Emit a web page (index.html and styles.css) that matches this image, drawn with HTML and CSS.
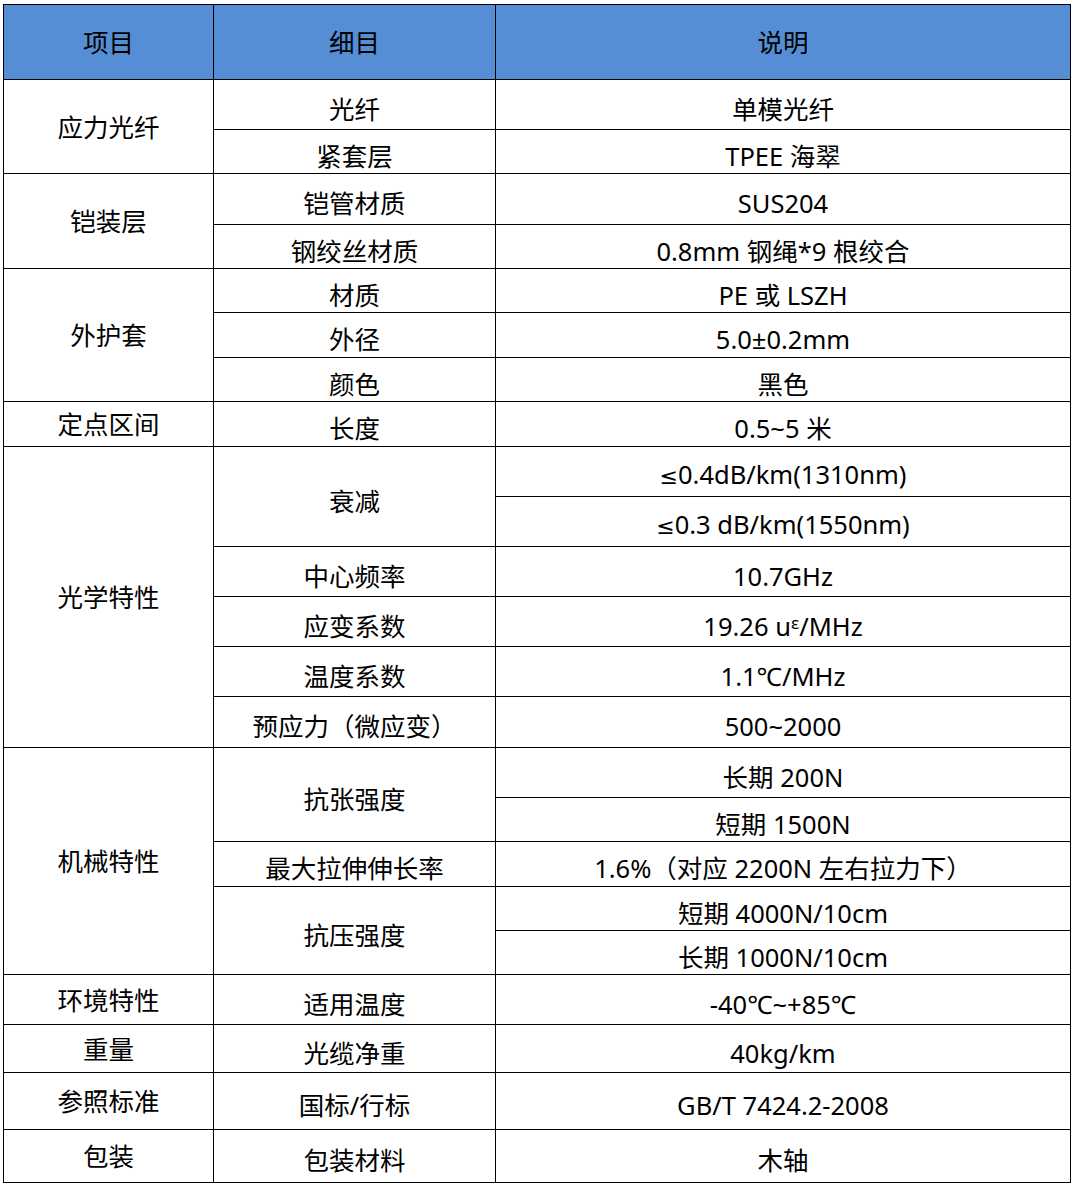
FILE: index.html
```html
<!DOCTYPE html>
<html lang="zh-CN">
<head>
<meta charset="utf-8">
<title>光缆参数</title>
<link rel="stylesheet" href="styles.css">
</head>
<body>
<table class="spec">
  <colgroup><col class="col1"><col class="col2"><col class="col3"></colgroup>
  <thead>
    <tr class="h75"><th>项目</th><th>细目</th><th>说明</th></tr>
  </thead>
  <tbody>
    <tr class="h50"><td class="c1" rowspan="2">应力光纤</td><td class="c2">光纤</td><td class="c3">单模光纤</td></tr>
    <tr class="h44"><td class="c2">紧套层</td><td class="c3">TPEE 海翠</td></tr>
    <tr class="h51"><td class="c1" rowspan="2">铠装层</td><td class="c2">铠管材质</td><td class="c3">SUS204</td></tr>
    <tr class="h44"><td class="c2">钢绞丝材质</td><td class="c3">0.8mm 钢绳*9 根绞合</td></tr>
    <tr class="h44"><td class="c1" rowspan="3">外护套</td><td class="c2">材质</td><td class="c3">PE 或 LSZH</td></tr>
    <tr class="h45"><td class="c2">外径</td><td class="c3">5.0±0.2mm</td></tr>
    <tr class="h44"><td class="c2">颜色</td><td class="c3">黑色</td></tr>
    <tr class="h45"><td class="c1">定点区间</td><td class="c2">长度</td><td class="c3">0.5~5 米</td></tr>
    <tr class="h50"><td class="c1" rowspan="6">光学特性</td><td class="c2" rowspan="2">衰减</td><td class="c3"><span class="le">≤</span>0.4dB/km(1310nm)</td></tr>
    <tr class="h50"><td class="c3"><span class="le">≤</span>0.3 dB/km(1550nm)</td></tr>
    <tr class="h50"><td class="c2">中心频率</td><td class="c3">10.7GHz</td></tr>
    <tr class="h50"><td class="c2">应变系数</td><td class="c3">19.26 u<span class="eps">ɛ</span>/MHz</td></tr>
    <tr class="h50"><td class="c2">温度系数</td><td class="c3">1.1℃/MHz</td></tr>
    <tr class="h51"><td class="c2">预应力（微应变）</td><td class="c3">500~2000</td></tr>
    <tr class="h50"><td class="c1" rowspan="5">机械特性</td><td class="c2" rowspan="2">抗张强度</td><td class="c3">长期 200N</td></tr>
    <tr class="h44"><td class="c3">短期 1500N</td></tr>
    <tr class="h45"><td class="c2">最大拉伸伸长率</td><td class="c3">1.6%（对应 2200N 左右拉力下）</td></tr>
    <tr class="h44"><td class="c2" rowspan="2">抗压强度</td><td class="c3">短期 4000N/10cm</td></tr>
    <tr class="h44"><td class="c3">长期 1000N/10cm</td></tr>
    <tr class="h50"><td class="c1">环境特性</td><td class="c2">适用温度</td><td class="c3">-40℃~+85℃</td></tr>
    <tr class="h48"><td class="c1">重量</td><td class="c2">光缆净重</td><td class="c3">40kg/km</td></tr>
    <tr class="h57"><td class="c1">参照标准</td><td class="c2">国标/行标</td><td class="c3">GB/T 7424.2-2008</td></tr>
    <tr class="h53"><td class="c1">包装</td><td class="c2">包装材料</td><td class="c3">木轴</td></tr>
  </tbody>
</table>
</body>
</html>
```

FILE: styles.css
```css
html, body {
  background: #ffffff;
}
body {
  margin: 4px 0 0 3px;
  font-family: "Noto Sans", "Noto Sans CJK SC", sans-serif;
  font-size: 25.5px;
  color: #000000;
}
.spec {
  border-collapse: collapse;
  table-layout: fixed;
  width: 1067px;
}
.col1 { width: 210px; }
.col2 { width: 282px; }
.col3 { width: 575px; }
.spec th,
.spec td {
  border: 1px solid #000000;
  text-align: center;
  vertical-align: middle;
  line-height: 30px;
  padding: 0;
  white-space: nowrap;
}
.spec th {
  background: #558ed5;
  font-weight: normal;
}
.spec td.c2,
.spec td.c3 {
  padding-top: 8px;
}
.le {
  font-family: "DejaVu Sans", sans-serif;
  font-size: 22px;
}
.eps {
  font-size: 17px;
  vertical-align: 7px;
  line-height: 1;
}
.h44 { height: 44px; }
.h45 { height: 45px; }
.h48 { height: 48px; }
.h50 { height: 50px; }
.h51 { height: 51px; }
.h53 { height: 53px; }
.h57 { height: 57px; }
.h75 { height: 75px; }
```
